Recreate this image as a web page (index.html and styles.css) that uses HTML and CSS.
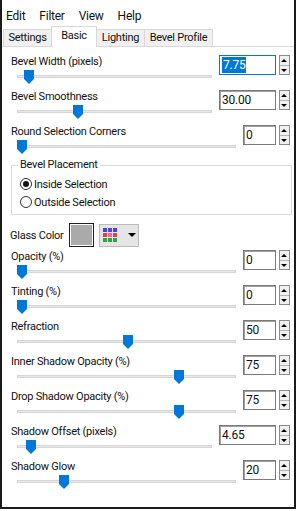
FILE: index.html
```html
<!DOCTYPE html>
<html>
<head>
<meta charset="utf-8">
<link rel="stylesheet" href="styles.css">
</head>
<body>
<div class="window">
  <div class="menubar">
    <span class="menu m-edit">Edit</span>
    <span class="menu m-filter">Filter</span>
    <span class="menu m-view">View</span>
    <span class="menu m-help">Help</span>
  </div>
  <div class="tabs">
    <div class="tab t-settings">Settings</div>
    <div class="tab t-basic active">Basic</div>
    <div class="tab t-lighting">Lighting</div>
    <div class="tab t-profile">Bevel Profile</div>
  </div>
  <div class="panel">
    <div class="row">
      <div class="ctl"><div class="label">Bevel Width (pixels)</div><div class="slider"><div class="track"></div><div class="thumb" style="left:7px"></div></div></div>
      <div class="spin"><div class="edit wide focus"><span class="sel">7.75</span></div><div class="arrows"><div class="up"></div><div class="down"></div></div></div>
    </div>
    <div class="row">
      <div class="ctl"><div class="label">Bevel Smoothness</div><div class="slider"><div class="track"></div><div class="thumb" style="left:56px"></div></div></div>
      <div class="spin"><div class="edit wide">30.00</div><div class="arrows"><div class="up"></div><div class="down"></div></div></div>
    </div>
    <div class="row">
      <div class="ctl"><div class="label">Round Selection Corners</div><div class="slider"><div class="track"></div><div class="thumb" style="left:0px"></div></div></div>
      <div class="spin"><div class="edit">0</div><div class="arrows"><div class="up"></div><div class="down"></div></div></div>
    </div>

    <div class="group">
      <div class="legend">Bevel Placement</div>
      <div class="radio"><span class="dot checked"></span><span class="rlabel">Inside Selection</span></div>
      <div class="radio"><span class="dot"></span><span class="rlabel">Outside Selection</span></div>
    </div>

    <div class="glass">
      <span class="glabel">Glass Color</span>
      <span class="swatch"></span>
      <span class="cbtn">
        <span class="grid">
          <i class="c-b"></i><i class="c-p"></i><i class="c-b"></i>
          <i class="c-r"></i><i class="c-k"></i><i class="c-r"></i>
          <i class="c-g"></i><i class="c-g"></i><i class="c-g"></i>
        </span>
        <span class="caret"></span>
      </span>
    </div>

    <div class="row">
      <div class="ctl"><div class="label">Opacity (%)</div><div class="slider"><div class="track"></div><div class="thumb" style="left:0px"></div></div></div>
      <div class="spin"><div class="edit">0</div><div class="arrows"><div class="up"></div><div class="down"></div></div></div>
    </div>
    <div class="row">
      <div class="ctl"><div class="label">Tinting (%)</div><div class="slider"><div class="track"></div><div class="thumb" style="left:0px"></div></div></div>
      <div class="spin"><div class="edit">0</div><div class="arrows"><div class="up"></div><div class="down"></div></div></div>
    </div>
    <div class="row">
      <div class="ctl"><div class="label">Refraction</div><div class="slider"><div class="track"></div><div class="thumb" style="left:106px"></div></div></div>
      <div class="spin"><div class="edit">50</div><div class="arrows"><div class="up"></div><div class="down"></div></div></div>
    </div>
    <div class="row">
      <div class="ctl"><div class="label">Inner Shadow Opacity (%)</div><div class="slider"><div class="track"></div><div class="thumb" style="left:157px"></div></div></div>
      <div class="spin"><div class="edit">75</div><div class="arrows"><div class="up"></div><div class="down"></div></div></div>
    </div>
    <div class="row">
      <div class="ctl"><div class="label">Drop Shadow Opacity (%)</div><div class="slider"><div class="track"></div><div class="thumb" style="left:157px"></div></div></div>
      <div class="spin"><div class="edit">75</div><div class="arrows"><div class="up"></div><div class="down"></div></div></div>
    </div>
    <div class="row">
      <div class="ctl"><div class="label">Shadow Offset (pixels)</div><div class="slider"><div class="track"></div><div class="thumb" style="left:9px"></div></div></div>
      <div class="spin"><div class="edit wide">4.65</div><div class="arrows"><div class="up"></div><div class="down"></div></div></div>
    </div>
    <div class="row">
      <div class="ctl"><div class="label">Shadow Glow</div><div class="slider"><div class="track"></div><div class="thumb" style="left:42px"></div></div></div>
      <div class="spin"><div class="edit">20</div><div class="arrows"><div class="up"></div><div class="down"></div></div></div>
    </div>
  </div>
</div>
</body>
</html>
```

FILE: styles.css
```css
* { box-sizing: border-box; }
html, body { margin: 0; padding: 0; background: #fff; }
body {
  font-family: Roboto, "Liberation Sans", sans-serif;
  font-size: 11px;
  letter-spacing: -0.25px;
  color: #111;
}
.window {
  width: 296px;
  height: 509px;
  border: 2px solid #1b1b1b;
  border-top: none;
  background: #fff;
  overflow: hidden;
}

/* menu */
.menubar {
  display: flex;
  gap: 14px;
  height: 24px;
  padding: 9px 0 0 4px;
  line-height: 15px;
  font-size: 12px;
}

/* tabs */
.tabs {
  display: flex;
  align-items: flex-end;
  height: 23px;
  padding-left: 1px;
  border-bottom: 1px solid #d9d9d9;
}
.tab {
  height: 17px;
  line-height: 15px;
  text-align: center;
  background: #f0f0f0;
  border: 1px solid #d9d9d9;
  border-bottom: none;
  margin-right: -1px;
}
.tab.active {
  position: relative;
  z-index: 1;
  height: 21px;
  margin-bottom: -1px;
  padding-top: 1px;
  background: #fff;
}
.t-settings { width: 49px; }
.t-basic { width: 46px; }
.t-lighting { width: 49px; }
.t-profile { width: 69px; }

/* panel */
.panel {
  padding: 7px 4px 0 9px;
}
.row {
  display: grid;
  grid-template-columns: 1fr auto;
  column-gap: 7px;
  height: 35px;
}
.label {
  height: 15px;
  line-height: 15px;
  white-space: nowrap;
}
.slider {
  position: relative;
  height: 20px;
  margin-left: 6px;
}
.track {
  position: absolute;
  left: 0;
  right: 0;
  top: 6px;
  height: 3px;
  background: #e7e7e7;
  border: 1px solid #d6d6d6;
}
.thumb {
  position: absolute;
  top: 1px;
  width: 10px;
  height: 14px;
  background: #0078d7;
  clip-path: polygon(0 0, 100% 0, 100% 9px, 50% 14px, 0 9px);
}

/* spinner */
.spin {
  display: flex;
  gap: 3px;
  margin-top: 1px;
  height: 20px;
}
.edit {
  width: 33px;
  height: 20px;
  border: 1px solid #7a7a7a;
  box-shadow: inset 1px 1px 0 #a0a0a0;
  padding-left: 2px;
  line-height: 18px;
  font-size: 12px;
  background: #fff;
}
.edit.wide { width: 57px; }
.edit.focus {
  border-color: #0078d7;
  box-shadow: none;
}
.sel {
  display: inline-block;
  background: #0078d7;
  color: #fff;
  line-height: 16px;
  padding: 0 1px;
}
.arrows {
  width: 11px;
  height: 20px;
  display: flex;
  flex-direction: column;
  border: 1px solid #8c8c8c;
  background: #f0f0f0;
}
.up, .down {
  flex: 1;
  position: relative;
}
.up { border-bottom: 1px solid #b4b4b4; }
.up::after, .down::after {
  content: "";
  position: absolute;
  left: 1px;
  top: 3px;
  border-left: 3px solid transparent;
  border-right: 3px solid transparent;
}
.up::after { border-bottom: 3px solid #000; }
.down::after { border-top: 3px solid #000; top: 3px; }

/* group box */
.group {
  position: relative;
  margin: 6px -2px 0 0;
  border: 1px solid #dcdcdc;
  padding: 9px 0 3px 8px;
}
.legend {
  position: absolute;
  top: -9px;
  left: 6px;
  padding: 0 2px;
  background: #fff;
  line-height: 15px;
}
.radio {
  display: flex;
  align-items: center;
  height: 18px;
}
.dot {
  width: 12px;
  height: 12px;
  border: 1px solid #333;
  border-radius: 50%;
  position: relative;
  background: #fff;
}
.dot.checked::after {
  content: "";
  position: absolute;
  left: 2px;
  top: 2px;
  width: 6px;
  height: 6px;
  border-radius: 50%;
  background: #111;
}
.rlabel { margin-left: 2px; }

/* glass colour */
.glass {
  display: flex;
  align-items: center;
  height: 24px;
  margin: 8px 0 2px -1px;
}
.swatch {
  width: 25px;
  height: 24px;
  margin-left: 5px;
  background: #aaaaaa;
  border: 1px solid #1e1e1e;
  box-shadow: inset 0 0 0 1px #ffffff;
}
.cbtn {
  display: flex;
  align-items: center;
  width: 40px;
  height: 23px;
  margin-left: 5px;
  padding-left: 3px;
  background: #e5e5e5;
  border: 1px solid #bcbcbc;
}
.grid {
  display: grid;
  grid-template-columns: repeat(3, 4px);
  grid-template-rows: repeat(3, 4px);
  gap: 1px;
}
.grid i { display: block; }
.c-b { background: #3f48d8; }
.c-p { background: #6a3fd0; }
.c-r { background: #e0404a; }
.c-k { background: #f06a7c; }
.c-g { background: #2fa24a; }
.caret {
  margin-left: 11px;
  border-left: 4px solid transparent;
  border-right: 4px solid transparent;
  border-top: 4px solid #000;
}
```
